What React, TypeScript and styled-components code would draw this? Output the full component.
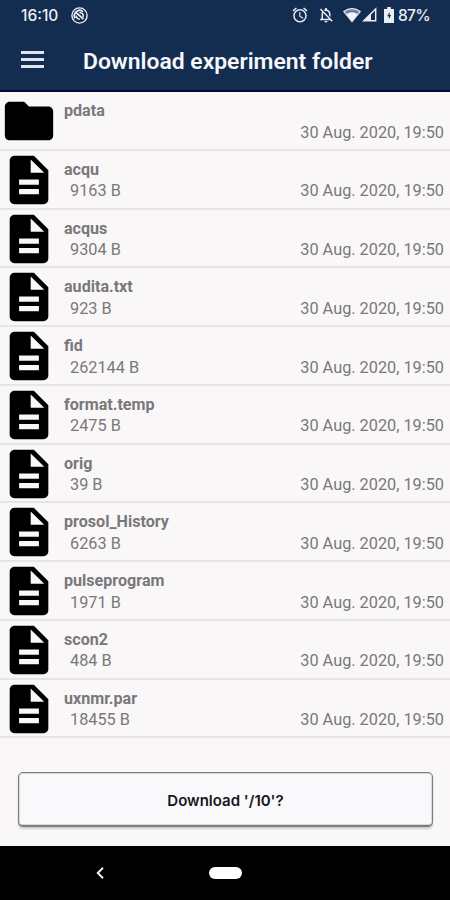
import React from "react";
import styled, { createGlobalStyle } from "styled-components";

const GlobalStyle = createGlobalStyle`
  *, *::before, *::after { box-sizing: border-box; }
  body { margin: 0; background: #f9f7f8; }
`;

const Screen = styled.div`
  display: flex;
  flex-direction: column;
  width: 450px;
  height: 900px;
  overflow: hidden;
  background: #f9f7f8;
  font-family: Roboto, "Liberation Sans", sans-serif;
`;

const Header = styled.header`
  height: 92px;
  flex: none;
  background: #122d4f;
  border-bottom: 2px solid #080638;
  color: #f6f8fc;
`;

const StatusBar = styled.div`
  display: flex;
  align-items: center;
  height: 30px;
  padding: 0 21px 0 21px;
  font-family: Inter, Roboto, sans-serif;
  font-size: 15.5px;
  font-weight: 500;
  color: #e9eef6;
`;

const Clock = styled.span`
  width: 50px;
`;

const StatusIcons = styled.div`
  display: flex;
  align-items: center;
  margin-left: auto;
`;

const StatusIcon = styled.svg<{ $gap?: number }>`
  display: block;
  flex: none;
  margin-right: ${(p) => p.$gap ?? 0}px;
`;

const Battery = styled.span`
  width: 31px;
  letter-spacing: -0.7px;
  white-space: nowrap;
`;

const Toolbar = styled.div`
  display: flex;
  align-items: center;
  height: 60px;
  padding-left: 21px;
`;

const MenuButton = styled.button`
  display: flex;
  flex-direction: column;
  gap: 4px;
  width: 23px;
  padding: 0;
  margin: -1px 39px 0 0;
  border: 0;
  background: none;
`;

const MenuLine = styled.span`
  height: 3px;
  background: #dfe4ee;
`;

const Title = styled.h1`
  margin: 4px 0 0;
  font-size: 22.9px;
  line-height: 28px;
  font-weight: 600;
  white-space: nowrap;
`;

const FileList = styled.ul`
  flex: 1;
  margin: 0;
  padding: 0;
  list-style: none;
`;

const FileRow = styled.li`
  display: flex;
  height: 58.75px;
  padding-right: 6px;
  border-bottom: 2px solid #e6e4e6;
  color: #79787a;
`;

const FileIcon = styled.svg`
  display: block;
  flex: none;
  width: 58px;
  height: 58px;
  margin-right: 6px;
  fill: #000;
`;

const FileInfo = styled.div`
  flex: 1;
  padding-top: 8px;
`;

const FileName = styled.div`
  height: 21.5px;
  font-size: 16.1px;
  line-height: 22px;
  font-weight: 700;
`;

const Details = styled.div`
  display: flex;
  justify-content: space-between;
  height: 22px;
  padding-left: 6px;
  font-size: 16.3px;
  line-height: 22px;
`;

const Footer = styled.div`
  flex: none;
  height: 74px;
  padding: 0 17px 0 18px;
`;

const DownloadButton = styled.button`
  display: block;
  width: 100%;
  height: 55px;
  padding-top: 3px;
  border: solid #7d7c7f;
  border-width: 1px 1px 2px;
  border-radius: 5px;
  background: #f9f8fa;
  box-shadow: 0 2px 2px rgba(0, 0, 0, 0.18), inset 0 0 0 1px rgba(0, 0, 0, 0.12);
  color: #171619;
  font-family: Inter, Roboto, sans-serif;
  font-size: 15px;
  font-weight: 600;
`;

const NavBar = styled.nav`
  display: grid;
  grid-template-columns: 200px 50px 200px;
  align-items: center;
  justify-items: center;
  flex: none;
  height: 54px;
  background: #000;
`;

const HomePill = styled.span`
  width: 33px;
  height: 12px;
  border-radius: 6px;
  background: #fff;
`;

const FOLDER = "M10 4H4c-1.1 0-1.99.9-1.99 2L2 18c0 1.1.9 2 2 2h16c1.1 0 2-.9 2-2V8c0-1.1-.9-2-2-2h-8l-2-2z";
const DOCUMENT =
  "M14 2H6c-1.1 0-1.99.9-1.99 2L4 20c0 1.1.89 2 1.99 2H18c1.1 0 2-.9 2-2V8l-6-6zm2.1 15.9H7.9v-2.2h8.2v2.2zm0-3.9H7.9v-2.2h8.2V14zm-3.4-5V3.5L18.3 9H12.7z";

interface Entry {
  name: string;
  size?: string;
}

const entries: Entry[] = [
  { name: "pdata" },
  { name: "acqu", size: "9163 B" },
  { name: "acqus", size: "9304 B" },
  { name: "audita.txt", size: "923 B" },
  { name: "fid", size: "262144 B" },
  { name: "format.temp", size: "2475 B" },
  { name: "orig", size: "39 B" },
  { name: "prosol_History", size: "6263 B" },
  { name: "pulseprogram", size: "1971 B" },
  { name: "scon2", size: "484 B" },
  { name: "uxnmr.par", size: "18455 B" },
];

export default function App() {
  return (
    <>
      <GlobalStyle />
      <Screen>
        <Header>
          <StatusBar>
            <Clock>16:10</Clock>
            <StatusIcon width="17" height="17" viewBox="0 0 17 17" fill="none" stroke="#e9eef6">
              <circle cx="8.5" cy="8.5" r="7.6" strokeWidth="1.4" />
              <path d="M4.2 11.2A5.1 5.1 0 0 1 12 4.8M5.2 5.6L12.4 12.2" strokeWidth="1.8" />
              <path d="M8.5 5.8c3-.4 4.4 2 3.6 4.4M5.5 8.6c-.2 2.4 1 3.6 3.4 3.6" strokeWidth="1.5" />
            </StatusIcon>
            <StatusIcons>
              <StatusIcon $gap={8} width="18" height="18" viewBox="0 0 24 24" fill="#e9eef6">
                <path d="M22 5.72l-4.6-3.86-1.29 1.53 4.6 3.86L22 5.72zM7.88 3.39L6.6 1.86 2 5.71l1.29 1.53 4.59-3.85zM12.5 8H11v6l4.75 2.85.75-1.23-4-2.37V8zM12 4c-4.97 0-9 4.03-9 9s4.02 9 9 9a9 9 0 0 0 0-18zm0 16c-3.87 0-7-3.13-7-7s3.13-7 7-7 7 3.13 7 7-3.13 7-7 7z" />
              </StatusIcon>
              <StatusIcon $gap={8} width="18" height="18" viewBox="0 0 24 24" fill="#e9eef6">
                <path d="M20 18.69L7.84 6.14 5.27 3.49 4 4.76l2.8 2.8v.01c-.52.99-.8 2.16-.8 3.42v5l-2 2v1h13.73l2 2L21 19.72l-1-1.03zM12 22c1.11 0 2-.89 2-2h-4c0 1.11.89 2 2 2zM8 17v-6c0-.6.1-1.2.25-1.76L15.8 17H8zm10-2.32V11c0-3.08-1.64-5.64-4.5-6.32V4c0-.83-.67-1.5-1.5-1.5s-1.5.67-1.5 1.5v.68c-.5.12-.97.29-1.42.5l1.5 1.5C10.7 6.56 11.34 6.5 12 6.5c2.5 0 4 2 4 4.5v1.68l2 2z" />
              </StatusIcon>
              <StatusIcon $gap={1} width="18" height="16" viewBox="0 0 18 16">
                <path d="M.8 4.6Q9-1.4 17.2 4.6L9 14.5z" fill="#6f8197" stroke="#e9eef6" strokeWidth="1.2" />
                <path d="M3.4 7Q9 3.4 14.6 7L9 14z" fill="#f1f4f9" />
              </StatusIcon>
              <StatusIcon $gap={7} width="15" height="16" viewBox="0 0 15 16">
                <path d="M1.8 13.8L13.7 2v11.8z" fill="none" stroke="#e9eef6" strokeWidth="1.4" />
                <path d="M1.5 14L9 6.4V14z" fill="#e9eef6" />
              </StatusIcon>
              <StatusIcon $gap={4} width="10" height="16" viewBox="0 0 11 16" preserveAspectRatio="none">
                <path d="M3.5 0h4v2H11v14H0V2h3.5z" fill="#e9eef6" />
                <path d="M6.2 5L3.6 9.2h1.7v3L7.8 8H6.2z" fill="#122d4f" />
              </StatusIcon>
              <Battery>87%</Battery>
            </StatusIcons>
          </StatusBar>
          <Toolbar>
            <MenuButton aria-label="Menu">
              <MenuLine />
              <MenuLine />
              <MenuLine />
            </MenuButton>
            <Title>Download experiment folder</Title>
          </Toolbar>
        </Header>
        <FileList>
          {entries.map((entry) => (
            <FileRow key={entry.name}>
              <FileIcon viewBox="0 0 24 24">
                <path d={entry.size ? DOCUMENT : FOLDER} />
              </FileIcon>
              <FileInfo>
                <FileName>{entry.name}</FileName>
                <Details>
                  <span>{entry.size}</span>
                  <span>30 Aug. 2020, 19:50</span>
                </Details>
              </FileInfo>
            </FileRow>
          ))}
        </FileList>
        <Footer>
          <DownloadButton>Download '/10'?</DownloadButton>
        </Footer>
        <NavBar>
          <svg width="8" height="12" viewBox="0 0 8 12" fill="none" stroke="#eee" strokeWidth="2">
            <path d="M7 .8L1.8 6 7 11.2" />
          </svg>
          <HomePill />
        </NavBar>
      </Screen>
    </>
  );
}
